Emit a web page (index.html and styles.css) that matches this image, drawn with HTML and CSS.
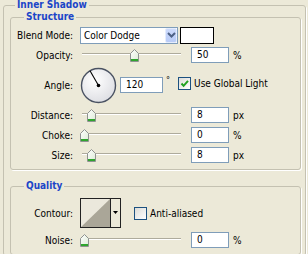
FILE: index.html
```html
<!DOCTYPE html>
<html lang="en">
<head>
  <meta charset="UTF-8">
  <title>Inner Shadow</title>
  <link rel="stylesheet" href="styles.css">
</head>
<body>
  <!-- shared slider thumb -->
  <svg class="defs" width="0" height="0">
    <defs>
      <linearGradient id="thumbFill" x1="0" y1="0" x2="1" y2="1">
        <stop offset="0" stop-color="#ffffff"/>
        <stop offset="1" stop-color="#dcebd6"/>
      </linearGradient>
      <symbol id="thumb" viewBox="0 0 9 13">
        <path d="M0.5 12.5V4.5L4.5 0.5L8.5 4.5V12.5Z" fill="url(#thumbFill)" stroke="#8e9290"/>
        <rect x="1" y="10" width="7" height="2" fill="#2fa52f"/>
      </symbol>
    </defs>
  </svg>

  <fieldset class="panel">
    <legend class="panel-title">Inner Shadow</legend>

    <!-- Structure -->
    <fieldset class="group group-structure">
      <legend class="group-title">Structure</legend>

      <div class="row">
        <span class="row-label">Blend Mode:</span>
        <div class="select">
          <span class="select-value">Color Dodge</span>
          <span class="select-button">
            <svg width="9" height="6" viewBox="0 0 9 6"><path d="M1 1L4.5 4.5L8 1" fill="none" stroke="#4d6185" stroke-width="2"/></svg>
          </span>
        </div>
        <span class="swatch"></span>
      </div>

      <div class="row">
        <span class="row-label">Opacity:</span>
        <div class="slider"><svg class="thumb" style="left:48px"><use href="#thumb"/></svg></div>
        <span class="field">50</span>
        <span class="unit">%</span>
      </div>

      <div class="row row-angle">
        <span class="row-label">Angle:</span>
        <svg class="dial" width="37" height="37" viewBox="0 0 37 37">
          <defs>
            <radialGradient id="dialFill" cx="0.4" cy="0.35" r="0.7">
              <stop offset="0" stop-color="#ffffff"/>
              <stop offset="1" stop-color="#dcdde2"/>
            </radialGradient>
          </defs>
          <circle cx="18.5" cy="18.5" r="17" fill="url(#dialFill)" stroke="#4a5262" stroke-width="1.4"/>
          <line x1="18.5" y1="18.5" x2="10" y2="3.8" stroke="#000" stroke-width="1.1"/>
          <circle cx="18.5" cy="18.5" r="1.8" fill="#000"/>
        </svg>
        <span class="field field-angle">120</span>
        <span class="degree">°</span>
        <span class="check check-global">
          <svg width="11" height="11" viewBox="0 0 11 11"><path d="M2.5 5.5L4.6 7.8L9 2.8" fill="none" stroke="#21a121" stroke-width="2"/></svg>
        </span>
        <span class="check-label label-global">Use Global Light</span>
      </div>

      <div class="row">
        <span class="row-label">Distance:</span>
        <div class="slider"><svg class="thumb" style="left:5px"><use href="#thumb"/></svg></div>
        <span class="field">8</span>
        <span class="unit">px</span>
      </div>

      <div class="row">
        <span class="row-label">Choke:</span>
        <div class="slider"><svg class="thumb" style="left:-2px"><use href="#thumb"/></svg></div>
        <span class="field">0</span>
        <span class="unit">%</span>
      </div>

      <div class="row">
        <span class="row-label">Size:</span>
        <div class="slider"><svg class="thumb" style="left:5px"><use href="#thumb"/></svg></div>
        <span class="field">8</span>
        <span class="unit">px</span>
      </div>
    </fieldset>

    <!-- Quality -->
    <fieldset class="group group-quality">
      <legend class="group-title">Quality</legend>

      <div class="row row-contour">
        <span class="row-label">Contour:</span>
        <div class="contour">
          <svg class="contour-preview" width="29" height="28" viewBox="0 0 29 28">
            <rect width="29" height="28" fill="#ebe8dc"/>
            <path d="M0 28L29 0V28Z" fill="#aaa698"/>
          </svg>
          <span class="contour-button">
            <svg width="5" height="3" viewBox="0 0 5 3"><path d="M0 0H5L2.5 3Z" fill="#000"/></svg>
          </span>
        </div>
        <span class="check check-aa"></span>
        <span class="check-label">Anti-aliased</span>
      </div>

      <div class="row">
        <span class="row-label">Noise:</span>
        <div class="slider"><svg class="thumb" style="left:-2px"><use href="#thumb"/></svg></div>
        <span class="field">0</span>
        <span class="unit">%</span>
      </div>
    </fieldset>
  </fieldset>
</body>
</html>
```

FILE: styles.css
```css
body {
  margin: 0;
  width: 308px;
  height: 254px;
  overflow: hidden;
  background-color: #ece9d8;
  font-family: "DejaVu Sans Condensed", "DejaVu Sans", sans-serif;
  font-size: 10px;
  color: #000;
}
.defs {
  position: absolute;
}
/* Group boxes */
.panel,
.group {
  border: 1px solid #c4c1b1;
  border-radius: 3px;
  box-shadow: 1px 1px 0 #fff;
  min-inline-size: 0;
}
.panel {
  margin: -1px 0 0 3px;
  width: 303px;
  padding: 0 4px 0 6px;
  box-sizing: border-box;
}
.panel-title,
.group-title {
  font-weight: bold;
  font-size: 10px;
  line-height: 12px;
  color: #1b45c8;
  padding: 0 2px;
}
.panel-title {
  margin-left: 5px;
}
.group {
  margin: 0;
  padding: 2px 0 4px 3px;
}
.group-title {
  margin-left: 10px;
}
.group-quality {
  margin-top: 10px;
}
/* Rows */
.row {
  display: flex;
  align-items: center;
  height: 20px;
  white-space: nowrap;
}
.row-angle {
  height: 40px;
}
.row-contour {
  height: 32px;
  margin: 3px 0 1px;
}
.row-label {
  width: 59px;
  margin-right: 7px;
  text-align: right;
  flex-shrink: 0;
}
/* Blend mode combo */
.select {
  display: flex;
  align-items: center;
  width: 98px;
  height: 17px;
  box-sizing: border-box;
  border: 1px solid #7f9db9;
  background-color: #fff;
}
.select-value {
  flex: 1;
  padding-left: 3px;
}
.select-button {
  display: flex;
  align-items: center;
  justify-content: center;
  width: 12px;
  height: 15px;
  box-sizing: border-box;
  border: 1px solid #e4ecfd;
  border-radius: 2px;
  background: linear-gradient(#cddbfc, #b8cbf7);
}
.swatch {
  width: 34px;
  height: 17px;
  margin-left: 2px;
  box-sizing: border-box;
  border: 1px solid #000;
  background-color: #fff;
}
/* Sliders */
.slider {
  position: relative;
  width: 99px;
  height: 13px;
  margin-left: 2px;
}
.slider::before {
  content: "";
  position: absolute;
  left: 0;
  right: 0;
  top: 4px;
  height: 1px;
  background-color: #aeab9c;
  border-bottom: 1px solid #fff;
}
.thumb {
  position: absolute;
  top: 0;
  width: 9px;
  height: 13px;
}
/* Number fields */
.field {
  width: 38px;
  height: 16px;
  margin-left: 10px;
  box-sizing: border-box;
  border: 1px solid #7f9db9;
  background-color: #fff;
  padding-left: 5px;
  line-height: 14px;
}
.field-angle {
  width: 43px;
  margin-left: 3px;
}
.unit {
  margin-left: 4px;
}
.degree {
  align-self: flex-start;
  margin-top: 10px;
  margin-left: 3px;
  font-size: 9px;
}
/* Angle dial */
.dial {
  display: block;
}
/* Checkboxes */
.check {
  display: flex;
  align-items: center;
  justify-content: center;
  width: 13px;
  height: 13px;
  box-sizing: border-box;
  border: 1px solid #1c5180;
  background: linear-gradient(135deg, #dcdcd7, #fff);
}
.check-global {
  margin-left: 8px;
  margin-bottom: 3px;
}
.check-label {
  margin-left: 3px;
}
.label-global {
  margin-bottom: 3px;
}
.check-aa {
  margin-left: 13px;
}
/* Contour picker */
.contour {
  display: flex;
  border: 1px solid #222;
  background-color: #ece9d8;
}
.contour-preview {
  display: block;
}
.contour-button {
  display: flex;
  justify-content: center;
  width: 10px;
  padding-top: 12px;
  border-left: 1px solid #222;
  box-sizing: border-box;
}
.contour-button svg {
  display: block;
}
```
